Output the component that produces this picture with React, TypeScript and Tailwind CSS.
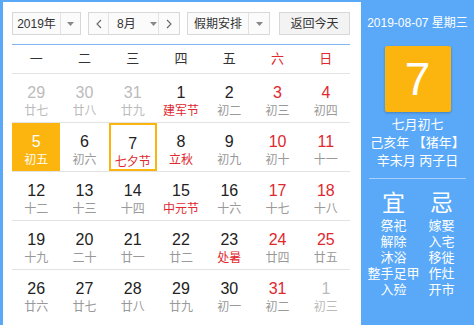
import React from 'react';

type Day = {
  n: number;
  l: string;
  kind?: 'other' | 'weekend';
  fest?: boolean;
  selected?: boolean;
  today?: boolean;
};

const weeks: Day[][] = [
  [
    { n: 29, l: '廿七', kind: 'other' },
    { n: 30, l: '廿八', kind: 'other' },
    { n: 31, l: '廿九', kind: 'other' },
    { n: 1, l: '建军节', fest: true },
    { n: 2, l: '初二' },
    { n: 3, l: '初三', kind: 'weekend' },
    { n: 4, l: '初四', kind: 'weekend' },
  ],
  [
    { n: 5, l: '初五', selected: true },
    { n: 6, l: '初六' },
    { n: 7, l: '七夕节', fest: true, today: true },
    { n: 8, l: '立秋', fest: true },
    { n: 9, l: '初九' },
    { n: 10, l: '初十', kind: 'weekend' },
    { n: 11, l: '十一', kind: 'weekend' },
  ],
  [
    { n: 12, l: '十二' },
    { n: 13, l: '十三' },
    { n: 14, l: '十四' },
    { n: 15, l: '中元节', fest: true },
    { n: 16, l: '十六' },
    { n: 17, l: '十七', kind: 'weekend' },
    { n: 18, l: '十八', kind: 'weekend' },
  ],
  [
    { n: 19, l: '十九' },
    { n: 20, l: '二十' },
    { n: 21, l: '廿一' },
    { n: 22, l: '廿二' },
    { n: 23, l: '处暑', fest: true },
    { n: 24, l: '廿四', kind: 'weekend' },
    { n: 25, l: '廿五', kind: 'weekend' },
  ],
  [
    { n: 26, l: '廿六' },
    { n: 27, l: '廿七' },
    { n: 28, l: '廿八' },
    { n: 29, l: '廿九' },
    { n: 30, l: '初一' },
    { n: 31, l: '初二', kind: 'weekend' },
    { n: 1, l: '初三', kind: 'other' },
  ],
];

const yi = ['祭祀', '解除', '沐浴', '整手足甲', '入殓'];
const ji = ['嫁娶', '入宅', '移徙', '作灶', '开市'];

function Caret() {
  return (
    <svg width="7" height="4" viewBox="0 0 7 4">
      <path d="M0 0h7L3.5 4z" fill="#888" />
    </svg>
  );
}

function Chevron({ dir }: { dir: 'l' | 'r' }) {
  return (
    <svg width="6" height="10" viewBox="0 0 6 10">
      <path d={dir === 'l' ? 'M5 1L1 5l4 4' : 'M1 1l4 4-4 4'} fill="none" stroke="#666" strokeWidth="1.1" />
    </svg>
  );
}

function DayCell({ d }: { d: Day }) {
  let numCls = 'text-[#222]';
  let lunCls = 'text-[#999]';
  if (d.kind === 'other') {
    numCls = 'text-[#bbb]';
    lunCls = 'text-[#bbb]';
  } else if (d.kind === 'weekend') {
    numCls = 'text-[#e0282e]';
  }
  if (d.fest) lunCls = 'text-[#e0282e]';
  if (d.selected) {
    numCls = 'text-white';
    lunCls = 'text-white';
  }
  return (
    <div
      className={`h-[48px] flex flex-col items-center pt-[9px] ${
        d.selected ? 'bg-[#fcb50f]' : ''
      } ${d.today ? 'border-2 border-[#fcb50f] pt-[7px]' : ''}`}
    >
      <span className={`text-[16px] leading-[20px] ${numCls}`}>{d.n}</span>
      <span className={`text-[12px] leading-[14px] mt-[1px] ${lunCls}`}>{d.l}</span>
    </div>
  );
}

export default function App() {
  return (
    <div
      className="w-[474px] h-[325px] flex bg-[#5aa9f8] pt-[2px] pl-[3px] overflow-hidden"
      style={{ fontFamily: '"Liberation Sans", "Noto Sans CJK SC", sans-serif' }}
    >
      <div className="w-[358px] h-full bg-white pl-[9px] pr-[11px] pt-[10px]">
        <div className="flex items-center h-[23px] text-[12px] text-[#333]">
          <div className="w-[69px] h-full flex border border-[#d8d8d8] bg-[#fbfbfb]">
            <div className="flex-1 flex items-center justify-center border-r border-[#e2e2e2]">2019年</div>
            <div className="w-[19px] flex items-center justify-center"><Caret /></div>
          </div>
          <div className="ml-[7px] w-[92px] h-full flex border border-[#d8d8d8] bg-[#fbfbfb]">
            <div className="w-[20px] flex items-center justify-center border-r border-[#e2e2e2]"><Chevron dir="l" /></div>
            <div className="flex-1 flex items-center pl-[8px] gap-[14px] border-r border-[#e2e2e2]">
              <span>8月</span>
              <Caret />
            </div>
            <div className="w-[20px] flex items-center justify-center"><Chevron dir="r" /></div>
          </div>
          <div className="ml-[7px] w-[83px] h-full flex border border-[#d8d8d8] bg-[#fbfbfb]">
            <div className="flex-1 flex items-center justify-center border-r border-[#e2e2e2]">假期安排</div>
            <div className="w-[20px] flex items-center justify-center"><Caret /></div>
          </div>
          <div className="ml-[9px] w-[71px] h-full flex items-center justify-center border border-[#d8d8d8] bg-[#f3f3f3]">
            返回今天
          </div>
        </div>
        <div className="mt-[9px] h-[1px] bg-[#7fb6f2]" />
        <div className="grid grid-cols-7 h-[29px] border-b border-[#e3e3e3] text-[13px] items-center text-center">
          {['一', '二', '三', '四', '五'].map(w => (
            <span key={w} className="text-[#333]">{w}</span>
          ))}
          <span className="text-[#e0282e]">六</span>
          <span className="text-[#e0282e]">日</span>
        </div>
        {weeks.map((wk, i) => (
          <div key={i} className={`grid grid-cols-7 ${i < weeks.length - 1 ? 'border-b border-[#e3e3e3]' : ''}`}>
            {wk.map((d, j) => (
              <DayCell key={j} d={d} />
            ))}
          </div>
        ))}
      </div>
      <div className="flex-1 flex flex-col items-center text-white pt-[13px]">
        <div className="text-[12px] leading-[16px]">2019-08-07 星期三</div>
        <div className="mt-[15px] w-[66px] h-[66px] bg-[#fcb50f] rounded-[2px] shadow-[0_1px_3px_rgba(0,0,0,0.25)] flex items-center justify-center text-[46px] font-medium leading-none">
          7
        </div>
        <div className="mt-[4px] text-[13px] leading-[18px] text-center">
          <div>七月初七</div>
          <div className="whitespace-nowrap">己亥年 【猪年】</div>
          <div>辛未月 丙子日</div>
        </div>
        <div className="mt-[8px] w-[97px] h-[1px] bg-[#a9d0f8]" />
        <div className="mt-[10px] flex">
          <div className="w-[48px] flex flex-col items-center">
            <div className="text-[23px] leading-[28px]">宜</div>
            <div className="mt-[1px] text-[13px] leading-[16px] text-center">
              {yi.map(t => <div key={t} className="whitespace-nowrap">{t}</div>)}
            </div>
          </div>
          <div className="w-[48px] flex flex-col items-center">
            <div className="text-[23px] leading-[28px]">忌</div>
            <div className="mt-[1px] text-[13px] leading-[16px] text-center">
              {ji.map(t => <div key={t}>{t}</div>)}
            </div>
          </div>
        </div>
      </div>
    </div>
  );
}
